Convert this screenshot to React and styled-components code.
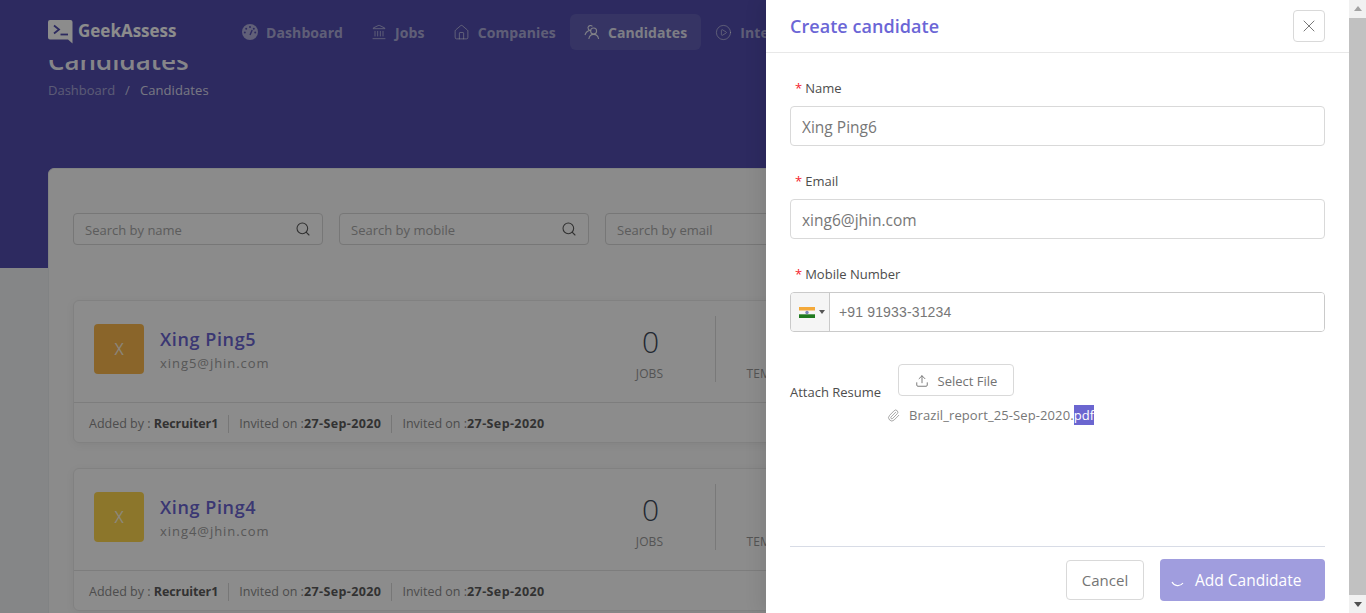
import React from 'react';
import styled, { createGlobalStyle } from 'styled-components';
import { Landmark, House, CirclePlay, Search, X, Upload, Paperclip } from 'lucide-react';

const GlobalStyle = createGlobalStyle`
  html, body {
    margin: 0;
    height: 100%;
    overflow: hidden;
  }
  body {
    font-family: "Open Sans", "Noto Sans", "Liberation Sans", sans-serif;
    color: #595959;
  }
  * {
    box-sizing: border-box;
  }
`;

const navItems = [
  { label: 'Dashboard', icon: <GaugeIcon /> },
  { label: 'Jobs', icon: <Landmark size={16} strokeWidth={1.4} /> },
  { label: 'Companies', icon: <House size={17} strokeWidth={1.4} /> },
  { label: 'Candidates', icon: <PeopleIcon />, active: true },
  { label: 'Interviews', icon: <CirclePlay size={17} strokeWidth={1.3} /> },
];

const candidates = [
  { name: 'Xing Ping5', email: 'xing5@jhin.com', color: '#fbb94e' },
  { name: 'Xing Ping4', email: 'xing4@jhin.com', color: '#ffd74f' },
];

function GaugeIcon() {
  return (
    <svg width="16" height="16" viewBox="0 0 16 16">
      <circle cx="8" cy="8" r="8" fill="currentColor" />
      <circle cx="8" cy="3" r="1" fill="#524eaf" />
      <circle cx="4.2" cy="4.8" r="1" fill="#524eaf" />
      <circle cx="11.8" cy="4.8" r="1" fill="#524eaf" />
      <circle cx="2.8" cy="8.6" r="1" fill="#524eaf" />
      <circle cx="13.2" cy="8.6" r="1" fill="#524eaf" />
      <path d="M8 11 L10.2 6" stroke="#524eaf" strokeWidth="1.4" />
    </svg>
  );
}

function PeopleIcon() {
  return (
    <svg width="16" height="16" viewBox="0 0 16 16" fill="none" stroke="currentColor" strokeWidth="1.1">
      <circle cx="9.6" cy="7" r="3" />
      <path d="M4.8 15 C5.4 11.8 7.2 10.4 9.6 10.4 C12 10.4 14 11.8 14.6 15" />
      <path d="M8.4 2.4 A2.6 2.6 0 0 0 4 3.4 C4 5 4.8 6 5.8 6.4 C3.2 7 1.6 8.8 1 11" />
    </svg>
  );
}

function LogoMark() {
  return (
    <svg width="25" height="24" viewBox="0 0 25 24">
      <path
        d="M2 0 H22.5 A2 2 0 0 1 24.5 2 V23.5 L20 19.5 H2 A2 2 0 0 1 0 17.5 V2 A2 2 0 0 1 2 0 Z"
        fill="currentColor"
      />
      <path d="M6 5.5 L11 9.5 L6 13.5" fill="none" stroke="#524eaf" strokeWidth="1.8" />
      <path d="M12.5 14.5 H20" stroke="#524eaf" strokeWidth="1.8" />
    </svg>
  );
}

function IndiaFlag() {
  return (
    <svg width="16" height="11" viewBox="0 0 16 11">
      <rect width="16" height="3.7" fill="#f4a93a" />
      <rect y="3.7" width="16" height="3.6" fill="#f5f5f5" />
      <rect y="7.3" width="16" height="3.7" fill="#1f7a1f" />
      <circle cx="8" cy="5.5" r="1.7" fill="#7d86b8" />
    </svg>
  );
}

const App = () => (
  <Viewport>
    <GlobalStyle />
    <Screen>
      <Hero>
        <Nav>
          <Logo>
            <LogoMark />
            <LogoText>GeekAssess</LogoText>
          </Logo>
          <NavList>
            {navItems.map((item) => (
              <NavItem key={item.label} $active={item.active}>
                {item.icon}
                {item.label}
              </NavItem>
            ))}
          </NavList>
        </Nav>
        <TitleClip>
          <PageTitle>Candidates</PageTitle>
        </TitleClip>
        <Breadcrumb>
          <span>Dashboard</span>
          <CrumbSep>/</CrumbSep>
          <CrumbCurrent>Candidates</CrumbCurrent>
        </Breadcrumb>
      </Hero>

      <MainCard>
        <SearchRow>
          {['Search by name', 'Search by mobile', 'Search by email'].map((text) => (
            <SearchBox key={text}>
              <SearchInput placeholder={text} readOnly />
              <Search size={16} strokeWidth={1.6} />
            </SearchBox>
          ))}
        </SearchRow>
        <CandidateList>
          {candidates.map((c) => (
            <CandidateCard key={c.email}>
              <CardTop>
                <Avatar $color={c.color}>X</Avatar>
                <Info>
                  <CandidateName>{c.name}</CandidateName>
                  <CandidateEmail>{c.email}</CandidateEmail>
                </Info>
                <Stat>
                  <StatValue>0</StatValue>
                  <StatLabel>JOBS</StatLabel>
                </Stat>
                <Stat>
                  <StatValue>0</StatValue>
                  <StatLabel>TEMPLATES</StatLabel>
                </Stat>
              </CardTop>
              <CardFooter>
                <FooterCell>Added by : <FooterName>Recruiter1</FooterName></FooterCell>
                <FooterCell>Invited on :<FooterDate>27-Sep-2020</FooterDate></FooterCell>
                <FooterCell>Invited on :<FooterDate>27-Sep-2020</FooterDate></FooterCell>
              </CardFooter>
            </CandidateCard>
          ))}
        </CandidateList>
      </MainCard>

      <Overlay />

      <Drawer>
        <DrawerHeader>
          <DrawerTitle>Create candidate</DrawerTitle>
          <CloseButton>
            <X size={20} strokeWidth={1.1} />
          </CloseButton>
        </DrawerHeader>
        <DrawerBody>
          <Field>
            <FieldLabel>Name</FieldLabel>
            <TextInput defaultValue="Xing Ping6" />
          </Field>
          <Field>
            <FieldLabel>Email</FieldLabel>
            <TextInput defaultValue="xing6@jhin.com" />
          </Field>
          <Field>
            <FieldLabel>Mobile Number</FieldLabel>
            <PhoneBox>
              <FlagButton>
                <IndiaFlag />
                <Caret />
              </FlagButton>
              <PhoneInput defaultValue="+91 91933-31234" />
            </PhoneBox>
          </Field>
          <AttachRow>
            <AttachLabel>Attach Resume</AttachLabel>
            <SelectFile>
              <Upload size={14} strokeWidth={1.6} />
              Select File
            </SelectFile>
          </AttachRow>
          <FileRow>
            <Paperclip size={13} strokeWidth={1.4} />
            <FileName>
              Brazil_report_25-Sep-2020.<Selected>pdf</Selected>
            </FileName>
          </FileRow>
        </DrawerBody>
        <DrawerFooter>
          <CancelButton>Cancel</CancelButton>
          <SubmitButton>
            <svg width="16" height="16" viewBox="0 0 16 16" fill="none">
              <path d="M2 10 A6.5 6.5 0 0 0 13 11" stroke="#fff" strokeWidth="1.2" />
            </svg>
            Add Candidate
          </SubmitButton>
        </DrawerFooter>
      </Drawer>
    </Screen>
    <Scrollbar>
      <ScrollArrow $up />
      <ScrollThumb />
      <ScrollArrow />
    </Scrollbar>
  </Viewport>
);

const Viewport = styled.div`
  display: flex;
  width: 100%;
  height: 613px;
  overflow: hidden;
`;

const Screen = styled.div`
  position: relative;
  flex: 1;
  min-width: 0;
  overflow: hidden;
  background: #f3f5f6;
`;

const Hero = styled.header`
  height: 268px;
  padding: 0 48px;
  background: #524eaf;
  color: #fff;
`;

const Nav = styled.nav`
  display: flex;
  align-items: flex-start;
  height: 60px;
  padding-top: 14px;
`;

const Logo = styled.div`
  display: flex;
  align-items: center;
  gap: 5px;
  width: 180px;
  margin-top: 6px;
  color: #fff;
  flex-shrink: 0;
`;

const LogoText = styled.span`
  font-family: "Open Sans", sans-serif;
  font-size: 17px;
  font-weight: 700;
  line-height: 20px;
  margin-top: -2px;
`;

const NavList = styled.div`
  display: flex;
  flex-shrink: 0;
`;

const NavItem = styled.a`
  display: flex;
  align-items: center;
  gap: 8px;
  height: 36px;
  padding: 0 14px;
  border-radius: 6px;
  font-size: 14px;
  font-weight: 700;
  letter-spacing: .1px;
  white-space: nowrap;
  color: ${(p) => (p.$active ? 'rgba(255,255,255,.85)' : 'rgba(255,255,255,.55)')};
  background: ${(p) => (p.$active ? 'rgba(255,255,255,.1)' : 'transparent')};
`;

const TitleClip = styled.div`
  display: flex;
  align-items: flex-end;
  height: 12px;
  overflow: hidden;
`;

const PageTitle = styled.h1`
  margin: 0 0 -2px;
  flex-shrink: 0;
  font-size: 26px;
  line-height: 28px;
  font-weight: 600;
  color: rgba(255,255,255,.95);
`;

const Breadcrumb = styled.div`
  display: flex;
  margin-top: 9px;
  font-size: 13px;
  line-height: 18px;
  color: rgba(255,255,255,.5);
`;

const CrumbSep = styled.span`
  margin: 0 10px;
  color: rgba(255,255,255,.7);
`;

const CrumbCurrent = styled.span`
  letter-spacing: .1px;
  color: rgba(255,255,255,.8);
`;

const MainCard = styled.main`
  margin: -100px 48px 0;
  padding: 44px 24px 0;
  height: 600px;
  background: #fdfdfd;
  border: 1px solid #eceef0;
  border-radius: 6px;
  position: relative;
`;

const SearchRow = styled.div`
  display: flex;
  gap: 16px;
`;

const SearchBox = styled.div`
  display: flex;
  align-items: center;
  width: 250px;
  height: 32px;
  padding: 0 11px;
  background: #fff;
  border: 1px solid #d9d9d9;
  border-radius: 4px;
  color: #595959;
`;

const SearchInput = styled.input`
  flex: 1;
  min-width: 0;
  border: 0;
  outline: 0;
  padding: 2px 0 0;
  font: inherit;
  font-size: 13px;
  background: transparent;
  &::placeholder {
    color: #a8a8a8;
  }
`;

const CandidateList = styled.div`
  display: flex;
  flex-direction: column;
  gap: 25px;
  margin-top: 55px;
`;

const CandidateCard = styled.article`
  height: 143px;
  background: #fff;
  border: 1px solid #ebebeb;
  border-radius: 6px;
  box-shadow: 0 2px 8px rgba(0, 0, 0, .06);
`;

const CardTop = styled.div`
  display: flex;
  align-items: flex-start;
  height: 102px;
  padding: 23px 0 0 20px;
  border-bottom: 1px solid #e4e4e4;
`;

const Avatar = styled.div`
  display: flex;
  align-items: center;
  justify-content: center;
  width: 50px;
  height: 50px;
  margin-right: 16px;
  flex-shrink: 0;
  background: ${(p) => p.$color};
  border-radius: 4px;
  color: rgba(255,255,255,.85);
  font-size: 16px;
`;

const Info = styled.div`
  width: 426px;
  padding-top: 2px;
  flex-shrink: 0;
`;

const CandidateName = styled.div`
  font-size: 18px;
  font-weight: 600;
  line-height: 26px;
  letter-spacing: .6px;
  color: #6a65d1;
`;

const CandidateEmail = styled.div`
  margin-top: 1px;
  font-size: 13px;
  line-height: 20px;
  letter-spacing: .95px;
  color: #a0a0a0;
`;

const Stat = styled.div`
  display: flex;
  flex-direction: column;
  align-items: center;
  justify-content: center;
  width: 130px;
  height: 66px;
  margin-top: -8px;
  padding-top: 5px;
  flex-shrink: 0;
  border-right: 1px solid #dcdcdc;
`;

const StatValue = styled.div`
  font-size: 30px;
  font-weight: 300;
  line-height: 40px;
  color: #3f4a5a;
`;

const StatLabel = styled.div`
  margin-top: 4px;
  padding-right: 2px;
  font-size: 12px;
  line-height: 16px;
  letter-spacing: .1px;
  color: #999;
`;

const CardFooter = styled.div`
  display: flex;
  align-items: center;
  height: 40px;
  padding: 1px 0 0 15px;
`;

const FooterCell = styled.div`
  padding-right: 10px;
  margin-right: 10px;
  font-size: 12.5px;
  line-height: 18px;
  color: #8c8c8c;
  border-right: 1px solid #d9d9d9;
  white-space: nowrap;
  &:last-child {
    border-right: 0;
  }
`;

const FooterName = styled.b`
  font-weight: 700;
  letter-spacing: -.1px;
  color: #5c5c5c;
`;

const FooterDate = styled.b`
  font-weight: 700;
  letter-spacing: .4px;
  color: #5c5c5c;
`;

const Overlay = styled.div`
  position: absolute;
  inset: 0;
  background: rgba(0, 0, 0, .45);
`;

const Drawer = styled.aside`
  position: absolute;
  top: 0;
  right: 0;
  bottom: 0;
  width: 583px;
  display: flex;
  flex-direction: column;
  background: #fff;
  box-shadow: -6px 0 16px rgba(0, 0, 0, .08);
`;

const DrawerHeader = styled.div`
  display: flex;
  align-items: center;
  justify-content: space-between;
  height: 53px;
  padding: 0 24px;
  border-bottom: 1px solid #e8e8e8;
`;

const DrawerTitle = styled.h2`
  margin: 0;
  font-size: 18px;
  font-weight: 600;
  letter-spacing: .05px;
  color: #6b66d6;
`;

const CloseButton = styled.button`
  display: flex;
  align-items: center;
  justify-content: center;
  width: 32px;
  height: 32px;
  padding: 0;
  background: #fff;
  border: 1px solid #d9d9d9;
  border-radius: 4px;
  color: #6b6b6b;
`;

const DrawerBody = styled.div`
  flex: 1;
  padding: 25px 24px 0;
`;

const Field = styled.div`
  margin-bottom: 25px;
`;

const FieldLabel = styled.label`
  display: block;
  height: 28px;
  padding-left: 5px;
  font-size: 13px;
  line-height: 20px;
  color: #4d4d4d;
  &::before {
    content: '*';
    margin-right: 3px;
    color: #f5222d;
  }
`;

const TextInput = styled.input`
  display: block;
  width: 100%;
  height: 40px;
  padding: 2px 11px 0;
  background: #fff;
  border: 1px solid #d9d9d9;
  border-radius: 4px;
  outline: 0;
  font: inherit;
  font-size: 15.5px;
  color: #777;
`;

const PhoneBox = styled.div`
  display: flex;
  height: 40px;
  border: 1px solid #cacaca;
  border-radius: 4px;
  overflow: hidden;
`;

const FlagButton = styled.div`
  display: flex;
  align-items: center;
  gap: 4px;
  width: 39px;
  padding-left: 8px;
  background: #f5f5f5;
  border-right: 1px solid #cacaca;
`;

const Caret = styled.span`
  width: 0;
  height: 0;
  border-left: 3px solid transparent;
  border-right: 3px solid transparent;
  border-top: 4px solid #555;
`;

const PhoneInput = styled.input`
  flex: 1;
  min-width: 0;
  padding: 0 0 0 9px;
  border: 0;
  outline: 0;
  font-family: "Liberation Sans", Arial, sans-serif;
  font-size: 14px;
  letter-spacing: .15px;
  color: #777;
`;

const AttachRow = styled.div`
  display: flex;
  align-items: flex-end;
  margin-top: 32px;
`;

const AttachLabel = styled.span`
  width: 108px;
  margin-bottom: -4px;
  font-size: 13px;
  line-height: 16px;
  color: #4d4d4d;
`;

const SelectFile = styled.button`
  display: flex;
  align-items: center;
  justify-content: center;
  gap: 9px;
  width: 116px;
  height: 32px;
  padding: 2px 0 0;
  background: #fff;
  border: 1px solid #d9d9d9;
  border-radius: 4px;
  font: inherit;
  font-size: 13px;
  color: #737373;
`;

const FileRow = styled.div`
  display: flex;
  align-items: center;
  gap: 9px;
  height: 20px;
  margin: 9px 0 0 97px;
  color: #8c8c8c;
`;

const FileName = styled.span`
  font-size: 13px;
  line-height: 20px;
  letter-spacing: .1px;
  color: #777;
`;

const Selected = styled.span`
  display: inline-block;
  line-height: 20px;
  background: #6b66d0;
  color: #fff;
`;

const DrawerFooter = styled.div`
  display: flex;
  justify-content: flex-end;
  align-items: center;
  gap: 16px;
  height: 54px;
  margin: 0 24px 13px;
  padding-top: 13px;
  border-top: 1px solid #d8dce6;
`;

const CancelButton = styled.button`
  width: 78px;
  height: 40px;
  padding: 0;
  background: #fff;
  border: 1px solid #d9d9d9;
  border-radius: 4px;
  font: inherit;
  font-size: 15px;
  color: #757575;
`;

const SubmitButton = styled.button`
  display: flex;
  align-items: center;
  gap: 9px;
  width: 165px;
  height: 42px;
  padding: 0 0 0 10px;
  background: #a09dde;
  border: 0;
  border-radius: 4px;
  font: inherit;
  font-size: 15.5px;
  font-weight: 400;
  color: #fff;
`;

const Scrollbar = styled.div`
  display: flex;
  flex-direction: column;
  align-items: center;
  flex-shrink: 0;
  width: 17px;
  background: #f1f1f1;
`;

const ScrollArrow = styled.div`
  width: 0;
  height: 0;
  margin: 6px 0;
  border-left: 4px solid transparent;
  border-right: 4px solid transparent;
  ${(p) => (p.$up ? 'border-bottom: 5px solid #a3a3a3;' : 'border-top: 5px solid #505050;')}
`;

const ScrollThumb = styled.div`
  flex: 1;
  width: 100%;
  margin: 1px 0;
  background: #c1c1c1;
`;

export default App;
